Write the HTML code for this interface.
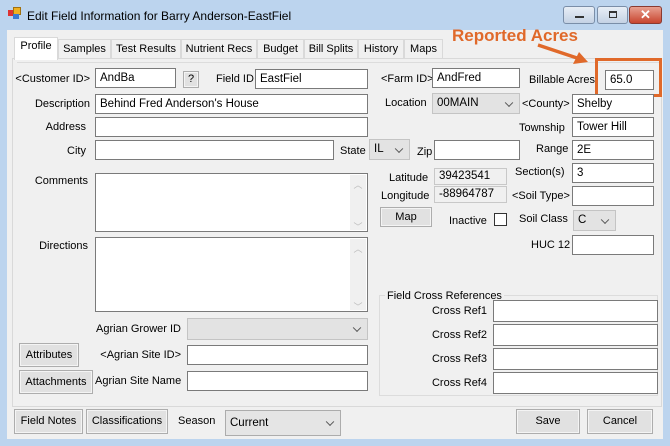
<!DOCTYPE html>
<html><head><meta charset="utf-8"><style>
*{box-sizing:border-box;margin:0;padding:0}
body{width:670px;height:446px;overflow:hidden;background:#bcd4ee;font-family:"Liberation Sans",sans-serif;font-size:11px;color:#000;position:relative}
.a{position:absolute}
.l{position:absolute;white-space:nowrap;line-height:14px}
.r{text-align:right}
.in{position:absolute;background:#fff;border:1px solid #7a7a7a;padding:2px 4px;line-height:14px;white-space:nowrap;font-size:11.5px}
.gr{background:#f0f0f0;border-color:#c8c8c8}
.sel{position:absolute;background:#e5e5e5;border:1px solid #acacac;padding:2px 4px;line-height:14px;font-size:11.5px}
.sel:after{content:"";position:absolute;right:7px;top:50%;width:5px;height:5px;border-right:1px solid #555;border-bottom:1px solid #555;transform:translateY(-70%) rotate(45deg)}
.dis{background:#e3e3e3;border-color:#c4c4c4}
.btn{position:absolute;background:#e1e1e1;border:1px solid #adadad;text-align:center;white-space:nowrap;box-shadow:inset 0 0 0 1px #f4f4f4}
.tab{position:absolute;top:39px;height:19px;border:1px solid #d9d9d9;border-bottom:none;background:#f0f0f0;text-align:center;line-height:18px}
.sb{position:absolute;right:1px;top:1px;bottom:1px;width:16px;background:#f0f0f0;color:#bbb;font-size:9px;text-align:center}
</style></head><body>
<div class="a" style="left:8px;top:10px;width:6px;height:6px;background:#d33"></div>
<div class="a" style="left:13px;top:7px;width:8px;height:8px;background:#f0b020;border:1px solid #a07010"></div>
<div class="a" style="left:13px;top:14px;width:6px;height:5px;background:#3a7ad0"></div>
<div class="l" style="left:27px;top:9px;font-size:12px">Edit Field Information for Barry Anderson-EastFiel</div>
<div class="a" style="left:563px;top:6px;width:32px;height:18px;border:1px solid #7a8ea8;border-radius:3px;background:linear-gradient(#e8eef6,#c4d2e4)"><div class="a" style="left:11px;top:9px;width:9px;height:2px;background:#333"></div></div>
<div class="a" style="left:597px;top:6px;width:31px;height:18px;border:1px solid #7a8ea8;border-radius:3px;background:linear-gradient(#e8eef6,#c4d2e4)"><div class="a" style="left:11px;top:4px;width:8px;height:7px;border:1px solid #333;border-top-width:2px"></div></div>
<div class="a" style="left:629px;top:6px;width:33px;height:18px;border:1px solid #8a3a30;border-radius:3px;background:linear-gradient(#e8a090,#c8452f);color:#fff;font-weight:bold;text-align:center;line-height:16px;font-size:13px">✕</div>
<div class="a" style="left:7px;top:30px;width:656px;height:409px;background:#f0f0f0"></div>
<div class="a" style="left:12px;top:58px;width:650px;height:349px;border:1px solid #d9d9d9;background:#f0f0f0"></div>
<div class="tab" style="left:58px;width:53px">Samples</div>
<div class="tab" style="left:111px;width:70px">Test Results</div>
<div class="tab" style="left:181px;width:76px">Nutrient Recs</div>
<div class="tab" style="left:257px;width:47px">Budget</div>
<div class="tab" style="left:304px;width:54px">Bill Splits</div>
<div class="tab" style="left:358px;width:46px">History</div>
<div class="tab" style="left:404px;width:39px">Maps</div>
<div class="tab" style="left:14px;top:37px;width:44px;height:23px;background:#fff;line-height:16px">Profile</div>
<div class="a" style="left:17px;top:62px;width:643px;height:1px;background:#dcdcdc"></div>
<div class="l r" style="left:10px;width:80px;top:72px">&lt;Customer ID&gt;</div>
<div class="in" style="left:95px;top:68px;width:81px;height:20px">AndBa</div>
<div class="btn" style="left:183px;top:71px;width:16px;height:17px;line-height:15px;font-size:11px">?</div>
<div class="l" style="left:216px;top:72px">Field ID</div>
<div class="in" style="left:255px;top:69px;width:113px;height:20px">EastFiel</div>
<div class="l" style="left:381px;top:72px">&lt;Farm ID&gt;</div>
<div class="in" style="left:432px;top:68px;width:88px;height:20px">AndFred</div>
<div class="l" style="left:529px;top:73px">Billable Acres</div>
<div class="in" style="left:605px;top:70px;width:49px;height:20px">65.0</div>
<div class="a" style="left:595px;top:58px;width:67px;height:39px;border:3px solid #e0692a"></div>
<div class="l" style="left:452px;top:27px;font-size:17px;font-weight:bold;color:#e0692a;line-height:18px">Reported Acres</div>
<svg class="a" style="left:530px;top:40px" width="70" height="30"><line x1="8" y1="5" x2="50" y2="19" stroke="#e0692a" stroke-width="3.5"/><polygon points="58,22 43,24 49,12" fill="#e0692a"/></svg>
<div class="l r" style="left:10px;width:80px;top:97px">Description</div>
<div class="in" style="left:95px;top:94px;width:273px;height:20px">Behind Fred Anderson's House</div>
<div class="l" style="left:385px;top:96px">Location</div>
<div class="sel dis" style="left:432px;top:93px;width:88px;height:21px">00MAIN</div>
<div class="l" style="left:522px;top:97px">&lt;County&gt;</div>
<div class="in" style="left:572px;top:94px;width:82px;height:20px">Shelby</div>
<div class="l r" style="left:10px;width:76px;top:120px">Address</div>
<div class="in" style="left:95px;top:117px;width:273px;height:20px"></div>
<div class="l" style="left:519px;top:121px">Township</div>
<div class="in" style="left:572px;top:117px;width:82px;height:20px">Tower Hill</div>
<div class="l r" style="left:10px;width:76px;top:144px">City</div>
<div class="in" style="left:95px;top:140px;width:239px;height:20px"></div>
<div class="l" style="left:340px;top:144px">State</div>
<div class="sel dis" style="left:369px;top:139px;width:41px;height:21px">IL</div>
<div class="l" style="left:417px;top:145px">Zip</div>
<div class="in" style="left:434px;top:140px;width:86px;height:20px"></div>
<div class="l" style="left:536px;top:142px">Range</div>
<div class="in" style="left:572px;top:140px;width:82px;height:20px">2E</div>
<div class="l r" style="left:10px;width:78px;top:174px">Comments</div>
<div class="in" style="left:95px;top:173px;width:273px;height:59px"><div class="sb"><div style="margin-top:3px">︿</div><div style="margin-top:28px">﹀</div></div></div>
<div class="l" style="left:389px;top:171px">Latitude</div>
<div class="in gr" style="left:434px;top:168px;width:73px;height:17px;line-height:11px">39423541</div>
<div class="l" style="left:381px;top:189px">Longitude</div>
<div class="in gr" style="left:434px;top:186px;width:73px;height:17px;line-height:11px">-88964787</div>
<div class="l" style="left:515px;top:165px">Section(s)</div>
<div class="in" style="left:572px;top:163px;width:82px;height:20px">3</div>
<div class="l" style="left:512px;top:189px">&lt;Soil Type&gt;</div>
<div class="in" style="left:572px;top:186px;width:82px;height:20px"></div>
<div class="btn" style="left:380px;top:207px;width:52px;height:20px;line-height:18px">Map</div>
<div class="l" style="left:449px;top:214px">Inactive</div>
<div class="a" style="left:494px;top:213px;width:13px;height:13px;border:1px solid #333;background:#fff"></div>
<div class="l" style="left:519px;top:212px">Soil Class</div>
<div class="sel dis" style="left:573px;top:210px;width:43px;height:21px">C</div>
<div class="l" style="left:531px;top:238px">HUC 12</div>
<div class="in" style="left:572px;top:235px;width:82px;height:20px"></div>
<div class="l r" style="left:10px;width:78px;top:239px">Directions</div>
<div class="in" style="left:95px;top:237px;width:273px;height:75px"><div class="sb"><div style="margin-top:3px">︿</div><div style="margin-top:44px">﹀</div></div></div>
<div class="a" style="left:379px;top:295px;width:279px;height:101px;border:1px solid #dcdcdc"></div>
<div class="l" style="left:385px;top:289px;background:#f0f0f0;padding:0 2px">Field Cross References</div>
<div class="l r" style="left:400px;width:87px;top:304px">Cross Ref1</div>
<div class="in" style="left:493px;top:300px;width:165px;height:22px"></div>
<div class="l r" style="left:400px;width:87px;top:328px">Cross Ref2</div>
<div class="in" style="left:493px;top:324px;width:165px;height:22px"></div>
<div class="l r" style="left:400px;width:87px;top:352px">Cross Ref3</div>
<div class="in" style="left:493px;top:348px;width:165px;height:22px"></div>
<div class="l r" style="left:400px;width:87px;top:376px">Cross Ref4</div>
<div class="in" style="left:493px;top:372px;width:165px;height:22px"></div>
<div class="l r" style="left:60px;width:121px;top:322px">Agrian Grower ID</div>
<div class="sel dis" style="left:187px;top:318px;width:181px;height:22px"></div>
<div class="btn" style="left:19px;top:343px;width:60px;height:24px;line-height:22px">Attributes</div>
<div class="l r" style="left:90px;width:91px;top:348px">&lt;Agrian Site ID&gt;</div>
<div class="in" style="left:187px;top:345px;width:181px;height:20px"></div>
<div class="btn" style="left:19px;top:370px;width:74px;height:24px;line-height:22px">Attachments</div>
<div class="l r" style="left:95px;width:86px;top:374px">Agrian Site Name</div>
<div class="in" style="left:187px;top:371px;width:181px;height:20px"></div>
<div class="btn" style="left:14px;top:409px;width:69px;height:25px;line-height:23px">Field Notes</div>
<div class="btn" style="left:86px;top:409px;width:82px;height:25px;line-height:23px">Classifications</div>
<div class="l" style="left:178px;top:414px">Season</div>
<div class="sel" style="left:225px;top:410px;width:116px;height:26px;line-height:20px">Current</div>
<div class="btn" style="left:516px;top:409px;width:64px;height:25px;line-height:23px">Save</div>
<div class="btn" style="left:587px;top:409px;width:66px;height:25px;line-height:23px">Cancel</div>
</body></html>
